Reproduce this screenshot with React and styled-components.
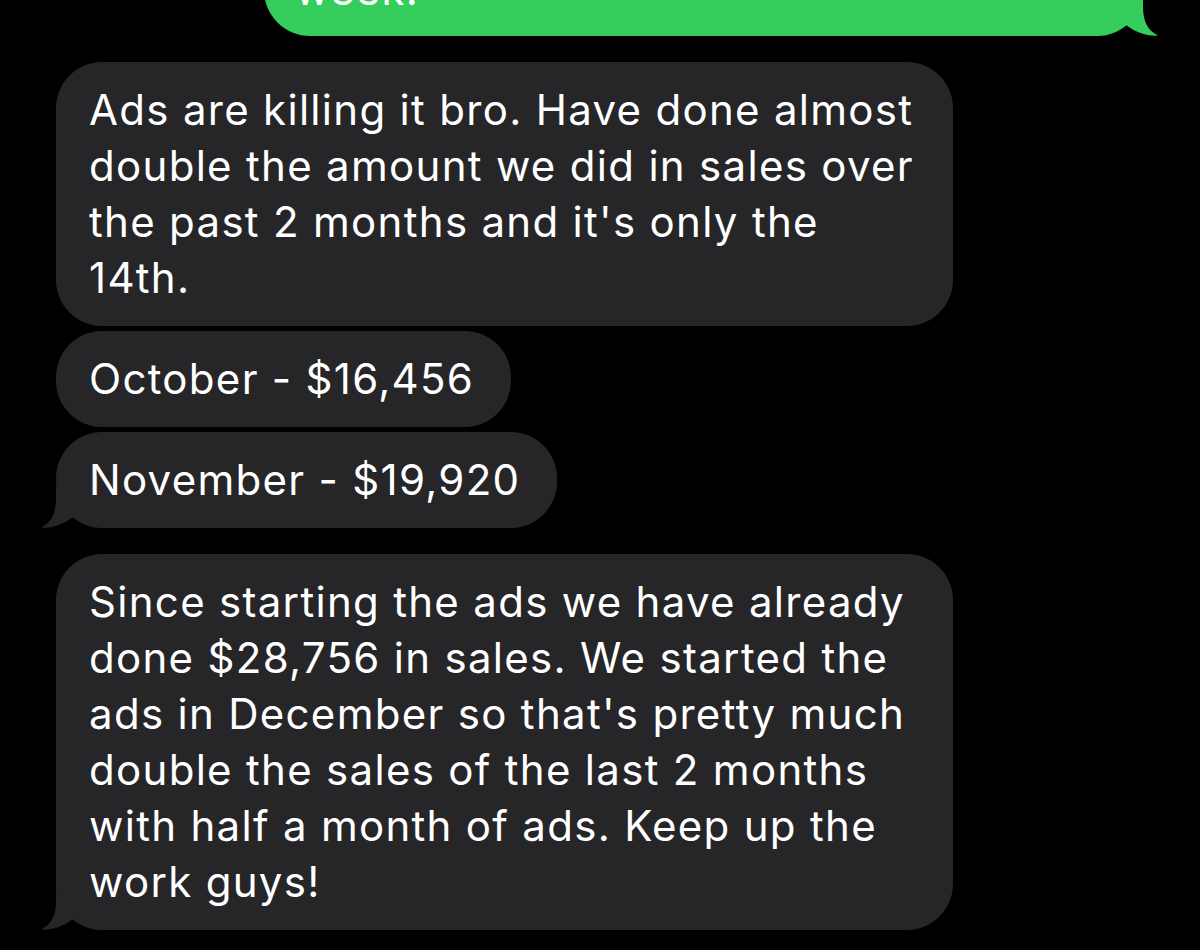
import styled, { createGlobalStyle } from 'styled-components';

const GlobalStyle = createGlobalStyle`
  html, body {
    margin: 0;
    padding: 0;
    background: #000;
  }
  body {
    font-family: Inter, "Liberation Sans", sans-serif;
    -webkit-font-smoothing: antialiased;
  }
`;

const GRAY = '#262628';
const GREEN = '#35cd5c';

const Screen = styled.div`
  width: 1200px;
  height: 950px;
  overflow: hidden;
  background: #000;
`;

const Thread = styled.div`
  display: flex;
  flex-direction: column;
  padding: 0 57px 0 56px;
`;

const Group = styled.div`
  display: flex;
  flex-direction: column;
  align-items: ${({ $sent }) => ($sent ? 'flex-end' : 'flex-start')};
  gap: 5px;
  margin-top: ${({ $first }) => ($first ? '-58px' : '26px')};
`;

const Bubble = styled.div`
  position: relative;
  box-sizing: border-box;
  width: ${({ $width }) => ($width ? `${$width}px` : 'auto')};
  padding: ${({ $sent }) => ($sent ? '20px 36px 18px 31px' : '20px 37px 20px 33px')};
  border-radius: 46px;
  background: ${({ $sent }) => ($sent ? GREEN : GRAY)};
  color: #fff;
  font-size: 42px;
  line-height: 56px;
  letter-spacing: 1.3px;
  white-space: nowrap;
`;

const Line = styled.span`
  display: block;
`;

const Tail = styled.svg`
  position: absolute;
  bottom: 0;
  width: 40px;
  height: 40px;
  ${({ $sent }) => ($sent ? 'right: -16px; transform: scaleX(-1);' : 'left: -16px;')}
`;

function BubbleTail({ sent }) {
  return (
    <Tail $sent={sent} viewBox="0 0 40 40" aria-hidden="true">
      <path
        d="M16 0 L16 10 C16 25 12 34 1 39.6 C13 40.2 24 36 33 29 L40 20 L40 0 Z"
        fill={sent ? GREEN : GRAY}
      />
    </Tail>
  );
}

function Message({ lines, sent, tail, width }) {
  return (
    <Bubble $sent={sent} $width={width}>
      {lines.map((line, i) => (
        <Line key={i}>{line}</Line>
      ))}
      {tail && <BubbleTail sent={sent} />}
    </Bubble>
  );
}

export default function App() {
  return (
    <>
      <GlobalStyle />
      <Screen>
        <Thread>
          <Group $sent $first>
            <Message sent tail width={879} lines={['week!']} />
          </Group>
          <Group>
            <Message
              width={897}
              lines={[
                'Ads are killing it bro. Have done almost',
                'double the amount we did in sales over',
                "the past 2 months and it's only the",
                '14th.',
              ]}
            />
            <Message lines={['October - $16,456']} />
            <Message tail lines={['November - $19,920']} />
          </Group>
          <Group>
            <Message
              tail
              width={897}
              lines={[
                'Since starting the ads we have already',
                'done $28,756 in sales. We started the',
                "ads in December so that's pretty much",
                'double the sales of the last 2 months',
                'with half a month of ads. Keep up the',
                'work guys!',
              ]}
            />
          </Group>
        </Thread>
      </Screen>
    </>
  );
}
